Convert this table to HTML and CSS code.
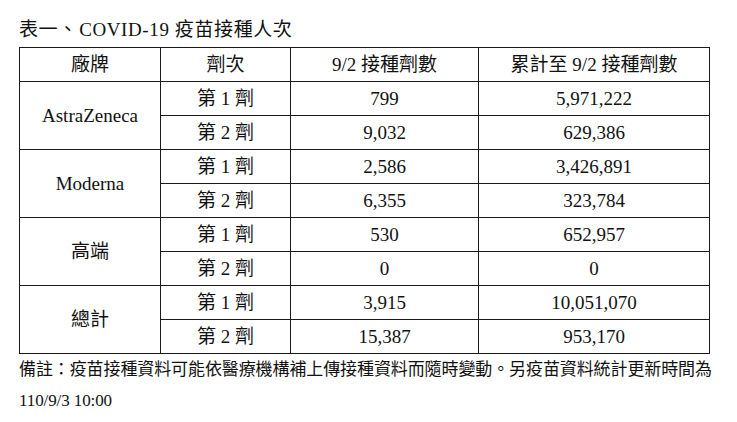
FILE: index.html
```html
<!DOCTYPE html>
<html lang="zh-Hant">
<head>
<meta charset="utf-8">
<title>COVID-19 疫苗接種人次</title>
<link rel="stylesheet" href="styles.css">
</head>
<body>
<div class="page">
  <h1 class="title">表一<span class="sep">、</span>COVID-19 疫苗接種人次</h1>
  <table class="data">
    <colgroup>
      <col class="c1"><col class="c2"><col class="c3"><col class="c4">
    </colgroup>
    <thead>
      <tr><th>廠牌</th><th>劑次</th><th>9/2 接種劑數</th><th>累計至 9/2 接種劑數</th></tr>
    </thead>
    <tbody>
      <tr><td rowspan="2">AstraZeneca</td><td>第 1 劑</td><td>799</td><td>5,971,222</td></tr>
      <tr><td>第 2 劑</td><td>9,032</td><td>629,386</td></tr>
      <tr><td rowspan="2">Moderna</td><td>第 1 劑</td><td>2,586</td><td>3,426,891</td></tr>
      <tr><td>第 2 劑</td><td>6,355</td><td>323,784</td></tr>
      <tr><td rowspan="2">高端</td><td>第 1 劑</td><td>530</td><td>652,957</td></tr>
      <tr><td>第 2 劑</td><td>0</td><td>0</td></tr>
      <tr><td rowspan="2">總計</td><td>第 1 劑</td><td>3,915</td><td>10,051,070</td></tr>
      <tr><td>第 2 劑</td><td>15,387</td><td>953,170</td></tr>
    </tbody>
  </table>
  <p class="note">備註：疫苗接種資料可能依醫療機構補上傳接種資料而隨時變動。另疫苗資料統計更新時間為<br>110/9/3 10:00</p>
</div>
</body>
</html>
```

FILE: styles.css
```css
html, body {
  margin: 0;
  padding: 0;
  background: #ffffff;
}

body {
  font-family: "Liberation Serif", "Noto Sans CJK TC", serif;
  color: #111111;
  text-spacing-trim: space-all;
}

.page {
  padding: 13px 0 0 19px;
  width: 700px;
}

.title {
  margin: 0;
  font-size: 19px;
  font-weight: normal;
  line-height: 34px;
  letter-spacing: 0.6px;
}

.sep {
  display: inline-block;
  width: 21px;
  text-align: left;
}

.data {
  border-collapse: collapse;
  width: 691px;
  table-layout: fixed;
  font-size: 19px;
}

.c1 { width: 141px; }
.c2 { width: 130px; }
.c3 { width: 188px; }
.c4 { width: 231px; }

.data th,
.data td {
  border: 1px solid #1a1a1a;
  height: 33px;
  padding: 0;
  text-align: center;
  vertical-align: middle;
  font-weight: normal;
  line-height: 22px;
}

.note {
  margin: 0;
  font-size: 17px;
  line-height: 31px;
  white-space: nowrap;
  letter-spacing: -0.1px;
}
```
